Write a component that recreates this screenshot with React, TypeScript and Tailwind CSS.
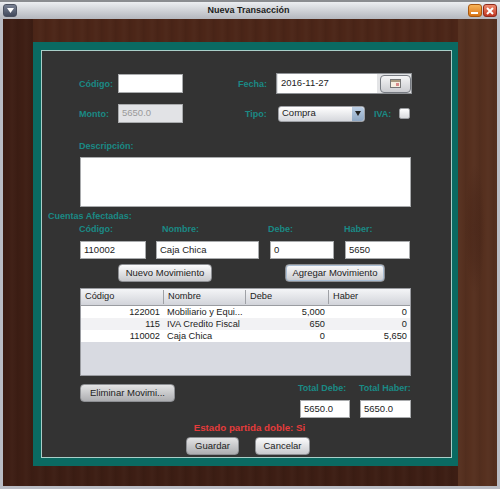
import type { ReactNode } from 'react';

const rows = [
  ['122001', 'Mobiliario y Equi...', '5,000', '0'],
  ['115', 'IVA Credito Fiscal', '650', '0'],
  ['110002', 'Caja Chica', '0', '5,650'],
];

function Label({ className = '', children }: { className?: string; children: ReactNode }) {
  return (
    <span className={`block shrink-0 text-[9px] leading-[12px] font-bold whitespace-nowrap text-[#1a8a85] ${className}`}>
      {children}
    </span>
  );
}

function Field({ className = '', off = false, children }: { className?: string; off?: boolean; children?: ReactNode }) {
  return (
    <div className={`flex shrink-0 items-center border border-[#a9abad] pl-[3px] text-[9.5px] ${off ? 'bg-[#e2e3e6] text-[#9a9a9a]' : 'bg-white text-[#222]'} ${className}`}>
      {children}
    </div>
  );
}

function Btn({ className = '', dim = false, children }: { className?: string; dim?: boolean; children: ReactNode }) {
  return (
    <div className={`flex h-[18px] shrink-0 items-center justify-center rounded-[4px] border border-[#8d8f93] bg-gradient-to-b text-[9.5px] whitespace-nowrap text-[#222] ${dim ? 'from-[#e4e4e5] to-[#adaeb1]' : 'from-[#fbfbfc] to-[#c9cace]'} ${className}`}>
      {children}
    </div>
  );
}

export default function App() {
  return (
    <div className="flex h-[489px] w-[500px] flex-col overflow-hidden bg-[#b9bcc4] font-['Liberation_Sans',Arial,sans-serif]">
      {/* title bar */}
      <div className="flex h-[19px] shrink-0 items-center justify-between border-t-2 border-[#8a8c90] bg-gradient-to-b from-[#eceef1] to-[#b4b7be] px-[3px]">
        <div className="flex h-[13px] w-[14px] items-center justify-center rounded-[3px] border border-[#4b5160] bg-gradient-to-b from-[#7b8395] to-[#424a5c]">
          <svg width="7" height="5" viewBox="0 0 7 5"><path d="M0 0h7L3.5 5z" fill="#fff" /></svg>
        </div>
        <span className="ml-[12px] text-[9px] font-bold text-[#1c1c1c]">Nueva Transacción</span>
        <div className="flex gap-[1px]">
          <div className="flex h-[13px] w-[14px] items-end justify-center rounded-[3px] border border-[#a8570f] bg-gradient-to-b from-[#f7b356] to-[#d9740f] pb-[2px]">
            <div className="h-[2px] w-[7px] bg-white" />
          </div>
          <div className="flex h-[13px] w-[14px] items-center justify-center rounded-[3px] border border-[#8e2a1c] bg-gradient-to-b from-[#ee8b70] to-[#c0341f]">
            <svg width="8" height="8" viewBox="0 0 8 8"><path d="M1 1l6 6M7 1L1 7" stroke="#fff" strokeWidth="2" /></svg>
          </div>
        </div>
      </div>

      {/* wood background */}
      <div className="mx-[3px] mb-[3px] flex-1 bg-[radial-gradient(ellipse_10px_65px_at_472px_210px,rgba(60,28,18,0.35)_0%,rgba(60,28,18,0.25)_50%,transparent_100%),repeating-linear-gradient(90deg,rgba(0,0,0,0.06)_0px,rgba(0,0,0,0)_5px,rgba(255,255,255,0.015)_9px,rgba(0,0,0,0.03)_14px),linear-gradient(90deg,#3e1e14_0px,#3e1e14_30px,transparent_30px,transparent_455px,#56301f_455px),linear-gradient(180deg,#4c2618_0px,#4c2618_23px,#3d1e14_447px)] pt-[23px] pl-[30px]">
        <div className="h-[424px] w-[425px] bg-[#0a6a62] pt-[8px] pl-[8px]">
          <div className="h-[408px] w-[411px] border border-[#a9cfc9] bg-[#333333] pt-[22px]">
            {/* fecha / codigo */}
            <div className="ml-[37px] flex h-[21px] items-center">
              <Label className="w-[39px]">Código:</Label>
              <Field className="h-[19px] w-[65px]" />
              <Label className="ml-[55px] w-[38px]">Fecha:</Label>
              <div className="flex h-[21px] w-[136px] items-center border border-[#8f9296] bg-[#e3e4e6] pl-[1px]">
                <div className="flex h-[19px] w-[100px] items-center bg-white pl-[3px] text-[9.5px] text-[#222]">2016-11-27</div>
                <div className="ml-[3px] flex h-[18px] w-[31px] items-center justify-center rounded-[4px] border border-[#777b82] bg-gradient-to-b from-[#f6f6f7] to-[#cbccd0]">
                  <svg width="11" height="9" viewBox="0 0 11 9">
                    <rect x="0.5" y="0.5" width="10" height="8" fill="#f6eee0" stroke="#777" />
                    <rect x="1" y="1" width="9" height="2" fill="#a99a80" />
                    <rect x="6" y="4" width="3" height="3" fill="#d98a8a" />
                  </svg>
                </div>
              </div>
            </div>

            {/* monto / tipo / iva */}
            <div className="mt-[9px] ml-[37px] flex h-[21px] items-center">
              <Label className="w-[39px]">Monto:</Label>
              <Field off className="h-[19px] w-[65px]">5650.0</Field>
              <Label className="ml-[62px] w-[33px]">Tipo:</Label>
              <div className="flex h-[16px] w-[87px] items-center justify-between rounded-[3px] border border-[#9ea0a5] bg-gradient-to-b from-[#ffffff] to-[#d5d7dc] pl-[3px] text-[9.5px] text-[#222]">
                Compra
                <div className="flex h-full w-[12px] items-center justify-center rounded-r-[3px] bg-gradient-to-b from-[#bcd0e6] to-[#8fa8c4]">
                  <svg width="6" height="5" viewBox="0 0 6 5"><path d="M0 0h6L3 5z" fill="#222" /></svg>
                </div>
              </div>
              <Label className="ml-[9px] w-[25px]">IVA:</Label>
              <div className="h-[11px] w-[11px] rounded-[2px] border border-[#9b9da1] bg-gradient-to-b from-[#ffffff] to-[#d9dadd]" />
            </div>

            {/* descripcion */}
            <Label className="mt-[16px] ml-[37px]">Descripción:</Label>
            <div className="mt-[5px] ml-[38px] h-[50px] w-[331px] border border-[#a9abad] bg-white" />

            {/* cuentas */}
            <Label className="mt-[3px] ml-[6px]">Cuentas Afectadas:</Label>
            <div className="mt-[1px] ml-[37px] flex">
              <Label className="w-[83px]">Código:</Label>
              <Label className="w-[106px]">Nombre:</Label>
              <Label className="w-[76px]">Debe:</Label>
              <Label>Haber:</Label>
            </div>
            <div className="mt-[6px] ml-[38px] flex">
              <Field className="h-[18px] w-[66px]">110002</Field>
              <Field className="ml-[10px] h-[18px] w-[103px]">Caja Chica</Field>
              <Field className="ml-[11px] h-[18px] w-[64px]">0</Field>
              <Field className="ml-[11px] h-[18px] w-[65px]">5650</Field>
            </div>
            <div className="mt-[5px] ml-[76px] flex">
              <Btn className="w-[94px]">Nuevo Movimiento</Btn>
              <Btn className="ml-[73px] w-[100px] border-[#5c7796] shadow-[inset_0_0_0_1px_#a9bdd3]">Agregar Movimiento</Btn>
            </div>

            {/* tabla */}
            <div className="mt-[6px] ml-[38px] flex h-[88px] w-[331px] flex-col border border-[#9a9ca1] bg-[#d8dae1] text-[9.25px] text-[#222]">
              <div className="grid h-[17px] shrink-0 grid-cols-[82px_82px_83px_1fr] items-center border-b border-[#9a9ca1] bg-gradient-to-b from-[#f4f5f7] to-[#d2d4da]">
                <span className="pl-[4px]">Código</span>
                <span className="border-l border-[#9fa1a6] pl-[4px]">Nombre</span>
                <span className="border-l border-[#9fa1a6] pl-[4px]">Debe</span>
                <span className="border-l border-[#9fa1a6] pl-[4px]">Haber</span>
              </div>
              {rows.map((r, i) => (
                <div key={r[0]} className={`grid h-[12px] shrink-0 grid-cols-[82px_82px_83px_1fr] items-center leading-[12px] ${i === 1 ? 'bg-[#f2f2f4]' : 'bg-white'}`}>
                  <span className="pr-[3px] text-right">{r[0]}</span>
                  <span className="pl-[4px] whitespace-nowrap">{r[1]}</span>
                  <span className="pr-[3px] text-right">{r[2]}</span>
                  <span className="pr-[3px] text-right">{r[3]}</span>
                </div>
              ))}
            </div>

            {/* totales */}
            <div className="mt-[6px] ml-[38px] flex">
              <Btn dim className="mt-[2px] w-[95px]">Eliminar Movimi...</Btn>
              <div className="ml-[123px]">
                <Label className="w-[60px]">Total Debe:</Label>
                <Field className="mt-[6px] ml-[2px] h-[18px] w-[50px]">5650.0</Field>
              </div>
              <div className="ml-[1px]">
                <Label>Total Haber:</Label>
                <Field className="mt-[6px] ml-[1px] h-[18px] w-[51px]">5650.0</Field>
              </div>
            </div>

            <p className="mt-[4px] pl-[6px] text-center text-[9.75px] leading-[12px] font-bold text-[#e53b3b]">Estado partida doble: Si</p>
            <div className="mt-[3px] ml-[144px] flex">
              <Btn dim className="w-[53px]">Guardar</Btn>
              <Btn className="ml-[16px] w-[55px]">Cancelar</Btn>
            </div>
          </div>
        </div>
      </div>
    </div>
  );
}
